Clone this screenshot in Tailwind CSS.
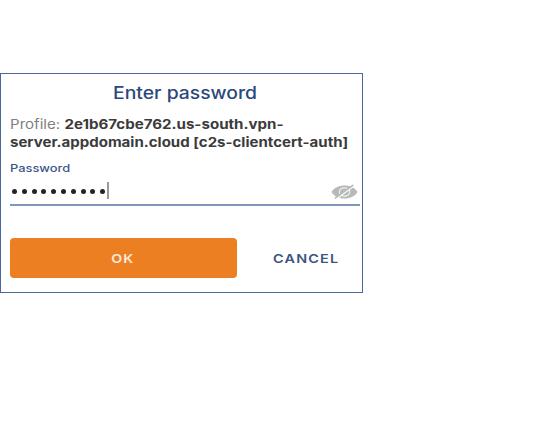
<!DOCTYPE html>
<html lang="en">
<head>
<meta charset="utf-8">
<title>Enter password</title>
<script src="https://cdn.jsdelivr.net/npm/@tailwindcss/browser@4"></script>
</head>
<body class="bg-white font-['Inter',sans-serif]">
<main class="pt-[73px]">
  <section class="flex h-[220px] w-[363px] flex-col border border-[#4a689c] pl-[9px] pr-[2px]">
    <h1 class="mt-[7px] h-6 pl-[103px] text-[17px] leading-6 font-medium text-[#2b487c]"><span class="inline-block origin-left scale-x-[1.137] whitespace-nowrap">Enter password</span></h1>
    <p class="mt-[11px] h-[35px] text-[13px] leading-[17.5px] whitespace-nowrap text-[#3b3b3b]">
      <span class="block w-fit origin-left scale-x-[1.161]"><span class="text-[#808080]">Profile:</span> <b class="font-bold">2e1b67cbe762.us-south.vpn-</b></span>
      <b class="block w-fit origin-left scale-x-[1.155] font-bold">server.appdomain.cloud [c2s-clientcert-auth]</b>
    </p>
    <label class="mt-[9px] h-4 text-[11px] leading-4 font-medium text-[#3c5687]"><span class="inline-block origin-left scale-x-[1.17]">Password</span></label>
    <div class="mt-[3px] flex h-[27px] w-[350px] items-center border-b-2 border-[#8296b8]">
      <div class="-mt-[1px] flex gap-[4.8px] pl-[2px]">
        <i class="size-[5px] rounded-full bg-[#222]"></i><i class="size-[5px] rounded-full bg-[#222]"></i><i class="size-[5px] rounded-full bg-[#222]"></i><i class="size-[5px] rounded-full bg-[#222]"></i><i class="size-[5px] rounded-full bg-[#222]"></i><i class="size-[5px] rounded-full bg-[#222]"></i><i class="size-[5px] rounded-full bg-[#222]"></i><i class="size-[5px] rounded-full bg-[#222]"></i><i class="size-[5px] rounded-full bg-[#222]"></i><i class="size-[5px] rounded-full bg-[#222]"></i>
      </div>
      <div class="-mt-[3px] ml-[1.8px] h-[17px] w-[2px] bg-[#999]"></div>
      <svg class="mr-[2px] ml-auto h-[16px] w-[27px]" viewBox="0 0 27 16">
        <path d="M0.5 8C3 3.8 7.5 1.5 13.5 1.5S24 3.8 26.5 8C24 12.2 19.5 14.5 13.5 14.5S3 12.2 0.5 8Z" fill="#b8bab9"/>
        <ellipse cx="13.5" cy="8" rx="5.2" ry="4.2" fill="none" stroke="#fff" stroke-opacity=".75" stroke-width="1.2"/>
        <path d="M4.5 15.5L23 2" stroke="#fff" stroke-width="1.4"/>
        <path d="M3.8 14.3L22.2 1" stroke="#b8bab9" stroke-width="1.6"/>
      </svg>
    </div>
    <div class="mt-[32px] flex h-10 items-center">
      <button class="h-10 w-[227px] rounded-[4px] bg-[#ec7f22] pt-[1px] pr-[1px] text-[12px] font-semibold tracking-[1px] text-[#fdeadb]"><span class="inline-block scale-x-[1.19]">OK</span></button>
      <button class="ml-[35.5px] pt-[1px] text-[12px] font-semibold tracking-[1px] text-[#3c5481]"><span class="inline-block origin-left scale-x-[1.2]">CANCEL</span></button>
    </div>
  </section>
</main>
</body>
</html>
